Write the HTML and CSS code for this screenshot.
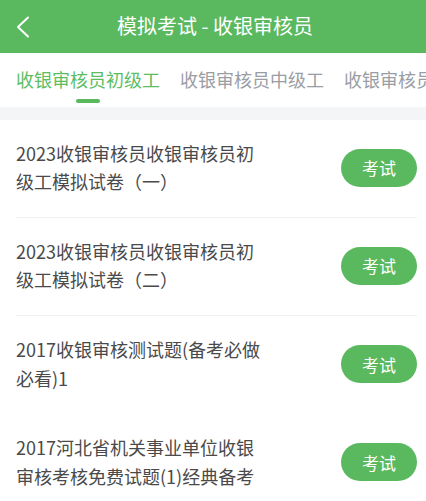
FILE: index.html
```html
<!DOCTYPE html>
<html lang="zh">
<head>
<meta charset="utf-8">
<link rel="stylesheet" href="styles.css">
</head>
<body>
<header class="topbar">
  <span class="back">
    <svg width="14" height="22" viewBox="0 0 14 22"><path d="M12 1.5 L2 11 L12 20.5" fill="none" stroke="#fff" stroke-width="2" stroke-linecap="round" stroke-linejoin="round"/></svg>
  </span>
  <h1 class="title">模拟考试 - 收银审核员</h1>
</header>
<nav class="tabs">
  <div class="tab active">收银审核员初级工<span class="indicator"></span></div>
  <div class="tab">收银审核员中级工</div>
  <div class="tab">收银审核员高级工</div>
</nav>
<div class="gap"></div>
<ul class="list">
  <li class="item">
    <p class="name">2023收银审核员收银审核员初级工模拟试卷（一）</p>
    <button class="btn">考试</button>
  </li>
  <li class="item">
    <p class="name">2023收银审核员收银审核员初级工模拟试卷（二）</p>
    <button class="btn">考试</button>
  </li>
  <li class="item plain">
    <p class="name">2017收银审核测试题(备考必做必看)1</p>
    <button class="btn">考试</button>
  </li>
  <li class="item plain">
    <p class="name">2017河北省机关事业单位收银审核考核免费试题(1)经典备考</p>
    <button class="btn">考试</button>
  </li>
</ul>
</body>
</html>
```
FILE: styles.css
```css
* { box-sizing: border-box; }
html, body {
  margin: 0;
  padding: 0;
  background: #fff;
  font-family: "Noto Sans CJK SC", "Noto Sans", sans-serif;
  overflow: hidden;
}
.topbar {
  height: 53px;
  background: #5ab95f;
  display: flex;
  align-items: center;
  justify-content: center;
  position: relative;
}
.back {
  position: absolute;
  left: 16px;
  top: 16px;
  display: flex;
}
.title {
  margin: 0 0 1px 4px;
  font-size: 20px;
  font-weight: normal;
  color: #fff;
  line-height: 1;
}
.tabs {
  height: 54px;
  display: flex;
  padding-left: 16px;
  white-space: nowrap;
  overflow: hidden;
}
.tab {
  position: relative;
  font-size: 18px;
  color: #9a9da4;
  line-height: 52px;
  margin-right: 20px;
  flex-shrink: 0;
}
.tab.active { color: #5dbd63; }
.indicator {
  position: absolute;
  left: 50%;
  bottom: 4px;
  width: 24px;
  height: 4px;
  margin-left: -12px;
  border-radius: 2px;
  background: #5ab95f;
}
.gap {
  height: 13px;
  background: #f4f5f7;
}
.list {
  list-style: none;
  margin: 0;
  padding: 0 9px 0 16px;
}
.item {
  height: 98px;
  display: flex;
  align-items: center;
  justify-content: space-between;
  padding-bottom: 3px;
  border-bottom: 1px solid #f0f0f0;
}
.item.plain { border-bottom: none; }
.name {
  margin: 0;
  width: 252px;
  font-size: 18px;
  line-height: 28.5px;
  color: #4a4a4a;
}
.btn {
  width: 76px;
  height: 38px;
  border: none;
  border-radius: 19px;
  background: #5ab95f;
  color: #fff;
  font-family: inherit;
  font-size: 17px;
  padding: 0;
  margin-top: 1px;
}
```
